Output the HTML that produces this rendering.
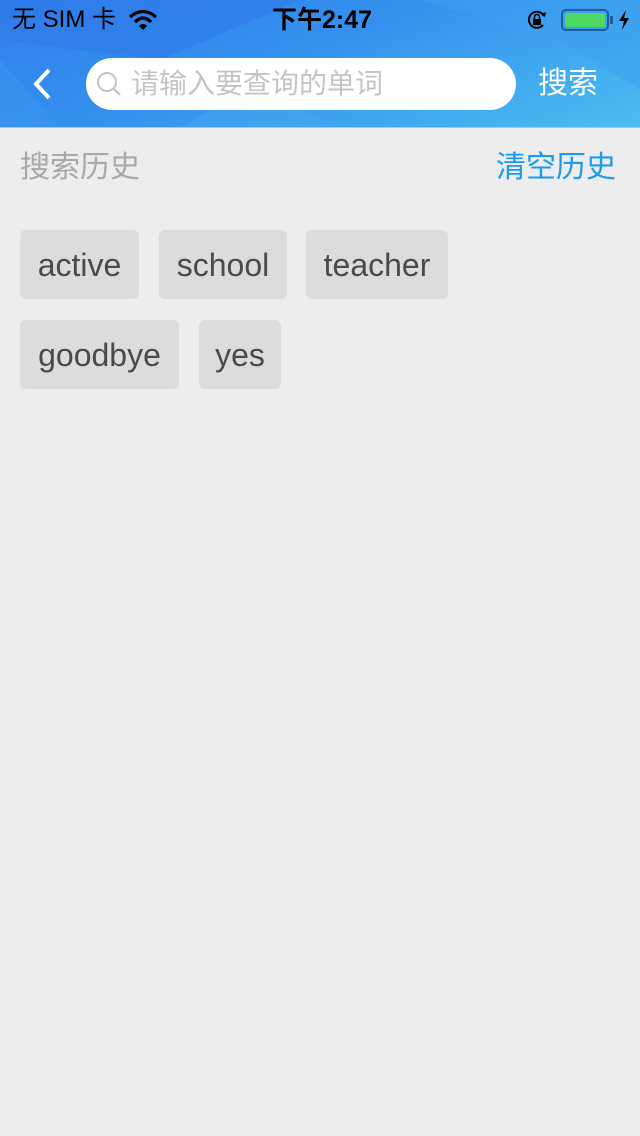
<!DOCTYPE html>
<html><head><meta charset="utf-8"><style>
*{margin:0;padding:0;box-sizing:border-box}
body{width:640px;height:1136px;background:#ededed;font-family:"Liberation Sans","Noto Sans CJK SC",sans-serif;position:relative;overflow:hidden}
.hdr{position:absolute;left:0;top:0;width:640px;height:128px;background:linear-gradient(160deg,#2f7fea 0%,#3591ee 45%,#42aef0 80%,#4ebcf2 100%);border-bottom:1px solid #b8c4cc;overflow:hidden}
.sb{position:absolute;top:0;height:40px;font-size:24px;color:#000;line-height:40px}
.search{position:absolute;left:86px;top:58px;width:430px;height:52px;border-radius:26px;background:#fff}
.ph{position:absolute;left:131px;top:58px;line-height:52px;font-size:28px;color:#c4c4c4}
.tag{position:absolute;height:69px;background:#dcdcdc;border-radius:6px;font-size:32px;color:#4a4a4a;line-height:71px;text-align:center}
</style></head><body>
<div class="hdr">
<svg width="640" height="128" style="position:absolute;left:0;top:0">
<polygon points="0,0 300,0 160,60 0,40" fill="#2d78e8" opacity=".5"/>
<polygon points="420,0 640,0 640,90 560,40" fill="#3ea0f0" opacity=".5"/>
<polygon points="0,128 60,128 0,60" fill="#3a95ee" opacity=".6"/>
<polygon points="180,128 260,80 330,128" fill="#46a8f0" opacity=".5"/>
</svg>
<div class="sb" style="left:12px">无 SIM 卡</div>
<svg style="position:absolute;left:128px;top:9px" width="30" height="22" viewBox="0 0 30 22"><path d="M2 8 Q15 -3 28 8" stroke="#000" stroke-width="3.2" fill="none"/><path d="M7 13 Q15 5 23 13" stroke="#000" stroke-width="3.2" fill="none"/><path d="M11 17 L15 21 L19 17 Q15 13 11 17Z" fill="#000"/></svg>
<div class="sb" style="left:272px;font-weight:bold;font-size:25px">下午2:47</div>
<svg style="position:absolute;left:526px;top:9px" width="22" height="22" viewBox="0 0 22 22"><path d="M18 7 A8 8 0 1 0 17 16" stroke="#000" stroke-width="2" fill="none"/><path d="M15 5 L19 8 L20 3Z" fill="#000"/><rect x="7" y="10" width="8" height="6" fill="#000"/><path d="M8.5 10 V8 a2.5 2.5 0 0 1 5 0 V10" stroke="#000" stroke-width="1.6" fill="none"/></svg>
<div style="position:absolute;left:561px;top:9px;width:48px;height:22px;border:2px solid #1e5c9e;border-radius:5px;padding:2px"><div style="width:100%;height:100%;background:#4cd964;border-radius:2px"></div></div>
<div style="position:absolute;left:610px;top:16px;width:3px;height:8px;background:#1e5c9e"></div>
<svg style="position:absolute;left:618px;top:10px" width="12" height="20" viewBox="0 0 12 20"><path d="M8 0 L1 11 H6 L4 20 L11 8 H6Z" fill="#000"/></svg>
<svg style="position:absolute;left:30px;top:67px" width="24" height="34" viewBox="0 0 24 34"><path d="M19 3 L6 17 L19 31" stroke="#fff" stroke-width="4" fill="none"/></svg>
<div class="search"></div>
<svg style="position:absolute;left:95px;top:70px" width="28" height="28" viewBox="0 0 28 28"><circle cx="12" cy="12" r="9" stroke="#c4c4c4" stroke-width="2" fill="none"/><path d="M18.5 18.5 L25 25" stroke="#c4c4c4" stroke-width="2.2"/></svg>
<div class="ph">请输入要查询的单词</div>
<div style="position:absolute;left:538px;top:64px;font-size:30px;color:#fff;line-height:40px">搜索</div>
</div>
<div style="position:absolute;left:20px;top:150px;font-size:30px;color:#a8a8a8;line-height:36px">搜索历史</div>
<div style="position:absolute;right:24px;top:150px;font-size:30px;color:#1a9af0;line-height:36px">清空历史</div>
<div class="tag" style="left:20px;top:230px;width:119px">active</div>
<div class="tag" style="left:159px;top:230px;width:128px">school</div>
<div class="tag" style="left:306px;top:230px;width:142px">teacher</div>
<div class="tag" style="left:20px;top:320px;width:159px">goodbye</div>
<div class="tag" style="left:199px;top:320px;width:82px">yes</div>
</body></html>
